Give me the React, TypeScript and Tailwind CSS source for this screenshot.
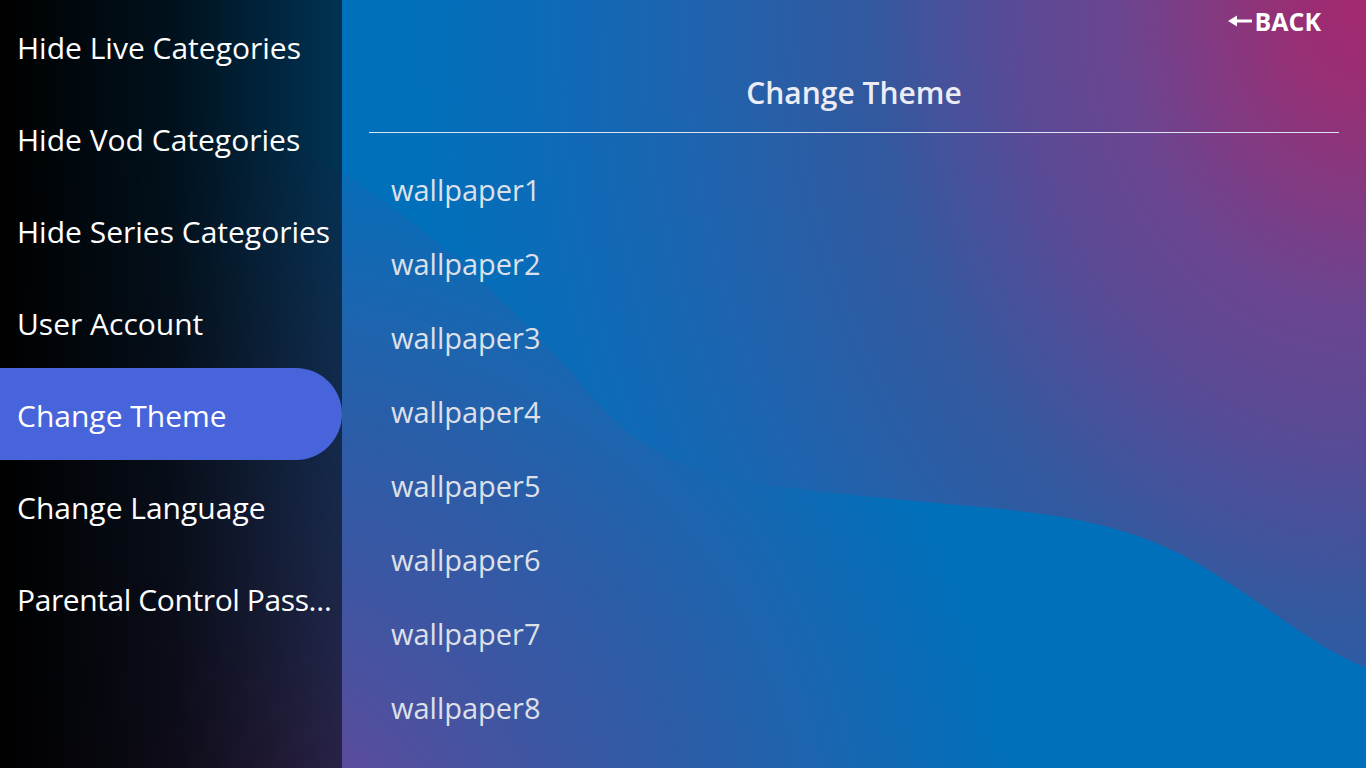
import React from 'react';

const menu = [
  'Hide Live Categories',
  'Hide Vod Categories',
  'Hide Series Categories',
  'User Account',
  'Change Theme',
  'Change Language',
  'Parental Control Password',
];

const wallpapers = ['wallpaper1', 'wallpaper2', 'wallpaper3', 'wallpaper4', 'wallpaper5', 'wallpaper6', 'wallpaper7', 'wallpaper8'];

// wave edge of the wallpaper, left to right
const curve =
  'M 0 55 C 130 85, 260 125, 342 173 C 420 220, 520 310, 592 397 C 640 455, 710 480, 760 485 C 820 492, 900 500, 980 507 C 1080 516, 1140 530, 1200 565 C 1260 600, 1310 645, 1366 668';

const Wallpaper = () => (
  <svg className="absolute inset-0 h-full w-full" viewBox="0 0 1366 768" preserveAspectRatio="none">
    <defs>
      <radialGradient id="tr" cx="1366" cy="0" r="960" gradientUnits="userSpaceOnUse" gradientTransform="translate(1366 0) scale(1 1.25) translate(-1366 0)">
        <stop offset="0" stopColor="#a3286f" />
        <stop offset="0.078" stopColor="#982f74" />
        <stop offset="0.255" stopColor="#6c4590" />
        <stop offset="0.365" stopColor="#5a4a96" />
        <stop offset="0.52" stopColor="#32599f" />
        <stop offset="0.7" stopColor="#1f63ae" />
        <stop offset="0.85" stopColor="#0e6ab7" />
        <stop offset="1" stopColor="#0070bb" />
      </radialGradient>
      <radialGradient id="bl" cx="260" cy="870" r="760" gradientUnits="userSpaceOnUse">
        <stop offset="0" stopColor="#6e449a" />
        <stop offset="0.13" stopColor="#5f4a9a" />
        <stop offset="0.29" stopColor="#4a52a0" />
        <stop offset="0.4" stopColor="#3d56a2" />
        <stop offset="0.6" stopColor="#2a5da8" />
        <stop offset="0.73" stopColor="#1e64ae" />
        <stop offset="0.87" stopColor="#0e6ab5" />
        <stop offset="1" stopColor="#0070bb" />
      </radialGradient>
    </defs>
    <rect width="1366" height="768" fill="#0070bb" />
    <path d={`${curve} L 1366 0 L 0 0 Z`} fill="url(#tr)" />
    <path d={`${curve} L 1366 768 L 0 768 Z`} fill="url(#bl)" />
  </svg>
);

export default function App() {
  return (
    <div className="relative h-[768px] w-[1366px] overflow-hidden font-['Open_Sans',sans-serif]">
      <Wallpaper />
      <div className="relative flex h-full">
        {/* side menu */}
        <aside className="h-full w-[342px] shrink-0 bg-gradient-to-r from-black via-black/85 to-black/55">
          {menu.map((item, i) => (
            <div
              key={item}
              className={
                item === 'Change Theme'
                  ? 'flex h-[92px] items-center rounded-r-[46px] bg-[#4864da] pl-[17px] pr-[2px] pt-[2px]'
                  : 'flex h-[92px] items-center pl-[17px] pr-[2px] pt-[2px]'
              }
            >
              <span className={i === menu.length - 1 ? 'truncate text-[30px] tracking-[-0.4px] text-white' : 'truncate text-[30px] text-white'}>
                {item}
              </span>
            </div>
          ))}
        </aside>

        {/* theme list */}
        <main className="flex flex-1 flex-col">
          <div className="flex h-[42px] items-center justify-end pr-[45px]">
            <button className="flex items-center gap-[2px] text-[25px] font-bold leading-none text-white">
              <svg width="24" height="12" viewBox="0 0 24 12">
                <path d="M0 6 L9 0.5 L9 4.5 L24 4.5 L24 7.5 L9 7.5 L9 11.5 Z" fill="white" />
              </svg>
              BACK
            </button>
          </div>
          <div className="mx-[27px] flex h-[91px] items-center justify-center border-b border-[#dce4f4] pt-[10px]">
            <h1 className="text-[30px] font-semibold text-[#ececf4]">Change Theme</h1>
          </div>
          <ul className="pl-[49px] pt-[20px]">
            {wallpapers.map((w) => (
              <li key={w} className="flex h-[74px] items-center text-[29px] text-[#dde0e8]">
                {w}
              </li>
            ))}
          </ul>
        </main>
      </div>
    </div>
  );
}
